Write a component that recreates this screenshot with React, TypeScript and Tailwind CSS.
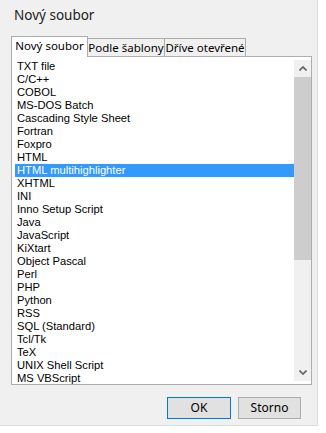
import React from 'react'

const items = [
  'TXT file',
  'C/C++',
  'COBOL',
  'MS-DOS Batch',
  'Cascading Style Sheet',
  'Fortran',
  'Foxpro',
  'HTML',
  'HTML multihighlighter',
  'XHTML',
  'INI',
  'Inno Setup Script',
  'Java',
  'JavaScript',
  'KiXtart',
  'Object Pascal',
  'Perl',
  'PHP',
  'Python',
  'RSS',
  'SQL (Standard)',
  'Tcl/Tk',
  'TeX',
  'UNIX Shell Script',
  'MS VBScript',
]

const selected = 'HTML multihighlighter'

function Chevron({ up }: { up?: boolean }) {
  return (
    <svg width="8" height="5" viewBox="0 0 8 5" className="block">
      <path
        d={up ? 'M0.5 4.5 L4 1 L7.5 4.5' : 'M0.5 0.5 L4 4 L7.5 0.5'}
        fill="none"
        stroke="#606060"
        strokeWidth="1.6"
      />
    </svg>
  )
}

export default function App() {
  return (
    <div className="w-[326px] h-[433px] bg-white" style={{ fontFamily: '"Noto Sans", "Open Sans", sans-serif' }}>
      <div className="w-[318px] h-[426px] bg-[#f0f0f0] border-r border-b border-[#dcdcdc] flex flex-col text-[#000]">
        <div className="h-[30px] pl-[14px] flex items-center text-[13.5px] text-[#222]">Nový soubor</div>

        <div className="mt-[5px] ml-[11px] w-[301px] flex flex-col">
          {/* tabs */}
          <div className="flex items-end h-[21px] text-[11.5px] whitespace-nowrap">
            <div className="h-[21px] w-[77px] bg-white border border-b-0 border-[#adadad] flex items-center justify-center relative z-10 -mb-px pb-[2px]">
              Nový soubor
            </div>
            <div className="h-[18px] w-[77px] bg-[#f0f0f0] border border-l-0 border-b-0 border-[#adadad] flex items-center justify-center">
              Podle šablony
            </div>
            <div className="h-[18px] w-[81px] bg-[#f0f0f0] border border-l-0 border-b-0 border-[#adadad] flex items-center justify-center">
              Dříve otevřené
            </div>
          </div>

          {/* panel with list */}
          <div className="h-[329px] bg-white border border-[#adadad] flex pl-[3px] py-[3px]">
            <div
              className="flex-1 flex flex-col text-[11.2px] leading-[13px]"
              style={{ fontFamily: '"Liberation Sans", Arial, sans-serif' }}
            >
              {items.map((item) => (
                <div
                  key={item}
                  className={
                    item === selected
                      ? 'h-[13px] pl-[2px] bg-[#3399ff] text-white whitespace-nowrap'
                      : 'h-[13px] pl-[2px] whitespace-nowrap'
                  }
                >
                  {item}
                </div>
              ))}
            </div>
            <div className="w-[17px] bg-[#f0f0f0] flex flex-col">
              <div className="h-[17px] flex items-center justify-center">
                <Chevron up />
              </div>
              <div className="h-[183px] bg-[#cdcdcd]" />
              <div className="flex-1" />
              <div className="h-[17px] flex items-center justify-center">
                <Chevron />
              </div>
            </div>
          </div>
        </div>

        <div className="mt-[12px] flex justify-end gap-[7px] pr-[16px] text-[12px]">
          <button className="w-[64px] h-[22px] bg-[#e1e1e1] border border-[#0078d7] flex items-center justify-center">
            OK
          </button>
          <button className="w-[63px] h-[22px] bg-[#e1e1e1] border border-[#adadad] flex items-center justify-center">
            Storno
          </button>
        </div>
      </div>
    </div>
  )
}
